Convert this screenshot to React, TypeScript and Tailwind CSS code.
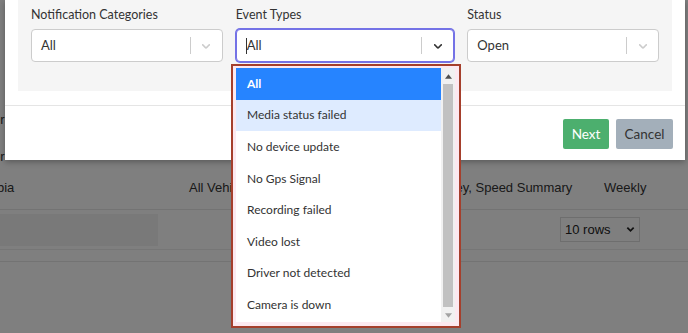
import React from "react";

const Chevron = ({ dark }: { dark?: boolean }) => (
  <svg width="14" height="14" viewBox="0 0 20 20" className={dark ? "fill-[#333]" : "fill-[#ccc]"}>
    <path d="M4.516 7.548c0.436-0.446 1.043-0.481 1.576 0l3.908 3.747 3.908-3.747c0.533-0.481 1.141-0.446 1.574 0 0.436 0.445 0.408 1.197 0 1.615-0.406 0.418-4.695 4.502-4.695 4.502-0.217 0.223-0.502 0.335-0.787 0.335s-0.57-0.112-0.789-0.335c0 0-4.287-4.084-4.695-4.502s-0.436-1.17 0-1.615z" />
  </svg>
);

const items = [
  "All",
  "Media status failed",
  "No device update",
  "No Gps Signal",
  "Recording failed",
  "Video lost",
  "Driver not detected",
  "Camera is down",
];

export default function App() {
  const ui = { fontFamily: 'Lato, "Open Sans", sans-serif' };
  return (
    <div className="relative w-[688px] h-[333px] overflow-hidden bg-white" style={{ fontFamily: '"Liberation Sans", Arial, sans-serif' }}>
      {/* page behind */}
      <div className="flex flex-col pt-[165px] text-[13px] text-[#333] whitespace-nowrap">
        <div className="flex items-center h-[45px] pt-[2px] border-b border-[#e6e6e6]">
          <div className="flex -ml-[29px]">
            <span className="w-[218px] shrink-0">Zambia</span>
            <span className="w-[234px] shrink-0">All Vehicles</span>
            <span className="w-[181px] shrink-0">Journey, Speed Summary</span>
            <span>Weekly</span>
          </div>
        </div>
        <div className="flex items-center h-[40px] border-b border-[#ececec]">
          <div className="w-[158px] h-[32px] bg-[#f3f3f3]" />
          <div className="ml-auto mr-[48px] w-[80px] h-[25px] border border-[#ddd] flex items-center justify-between px-[4px] text-[13px] text-[#222]">
            <span>10 rows</span>
            <svg width="9" height="9" viewBox="0 0 10 10"><path d="M1.5 3l3.5 3.5L8.5 3" stroke="#222" strokeWidth="2" fill="none" /></svg>
          </div>
        </div>
        <div className="h-[12px] border-b border-[#e6e6e6]" />
      </div>
      {/* left-edge fragments of page text */}
      <div className="absolute -left-[7px] top-[-10px] flex flex-col text-[13px] leading-[37px] text-[#333] whitespace-nowrap">
        <span>n</span><span>x</span><span>x</span><span>er</span><span>er</span>
      </div>
      {/* overlay */}
      <div className="absolute inset-0 bg-black/50" />
      {/* modal */}
      <div className="absolute left-[5px] top-0 w-[680px] h-[160px] bg-white shadow-[0_2px_6px_rgba(0,0,0,0.3)] flex flex-col" style={ui}>
        <div className="mx-[13px] h-[91px] bg-[#f5f5f5] flex gap-[13px] px-[13px] pt-[5px] text-[12px] text-[#333]">
          <div className="flex flex-col w-[192px]">
            <div className="h-[19px] leading-[19px] text-[12.5px]">Notification Categories</div>
            <div className="mt-[5px] h-[33px] bg-white border border-[#ccc] rounded-[4px] flex items-center">
              <span className="flex-1 pl-[9px] text-[#333] text-[13px]">All</span>
              <span className="w-px h-[17px] bg-[#ccc]" />
              <span className="w-[31px] flex justify-center"><Chevron /></span>
            </div>
          </div>
          <div className="flex flex-col w-[219px]">
            <div className="h-[19px] leading-[19px] text-[12.5px]">Event Types</div>
            <div className="mt-[5px] h-[33px] bg-white border border-[#7472e6] rounded-[4px] shadow-[0_0_0_1px_#7472e6] flex items-center">
              <span className="flex-1 pl-[9px] text-[#333] text-[13px] flex items-center"><span className="w-px h-[16px] bg-[#333]" />All</span>
              <span className="w-px h-[17px] bg-[#ccc]" />
              <span className="w-[31px] flex justify-center"><Chevron dark /></span>
            </div>
          </div>
          <div className="flex flex-col w-[192px]">
            <div className="h-[19px] leading-[19px] text-[12.5px]">Status</div>
            <div className="mt-[5px] h-[33px] bg-white border border-[#ccc] rounded-[4px] flex items-center">
              <span className="flex-1 pl-[9px] text-[#333] text-[13px]">Open</span>
              <span className="w-px h-[17px] bg-[#ccc]" />
              <span className="w-[31px] flex justify-center"><Chevron /></span>
            </div>
          </div>
        </div>
        <div className="mt-[14px] border-t border-[#e5e5e5] flex justify-end gap-[7px] pr-[12px] pt-[13px] text-[13.5px]">
          <button className="w-[46px] h-[30px] bg-[#4caf6e] text-white rounded-[2px]">Next</button>
          <button className="w-[57px] h-[30px] bg-[#a3afba] text-[#333] rounded-[2px]">Cancel</button>
        </div>
      </div>
      {/* dropdown menu */}
      <div className="absolute left-[231px] top-[64px] w-[230px] h-[264px] border-2 border-[#a53f2c] bg-[#fce9f0] p-[2px]" style={ui}>
        <div className="w-[219px] h-[254px] ml-[1px] bg-white flex text-[12px] text-[#333]">
          <div className="flex-1 flex flex-col">
            {items.map((t, i) => (
              <div
                key={t}
                className={
                  "h-[31.6px] flex items-center pl-[11px] shrink-0 " +
                  (i === 0 ? "bg-[#2684ff] text-white font-bold" : i === 1 ? "bg-[#deebff]" : "")
                }
              >
                {t}
              </div>
            ))}
          </div>
          <div className="w-[14px] bg-[#f1f1f1] flex flex-col items-center">
            <svg width="7" height="5" viewBox="0 0 8 5" className="mt-[6px]"><path d="M0 5L4 0L8 5Z" fill="#505050" /></svg>
            <div className="mt-[5px] w-[10px] flex-1 bg-[#c1c1c1]" />
            <svg width="7" height="5" viewBox="0 0 8 5" className="mt-[6px] mb-[4px]"><path d="M0 0L4 5L8 0Z" fill="#a3a3a3" /></svg>
          </div>
        </div>
      </div>
    </div>
  );
}
